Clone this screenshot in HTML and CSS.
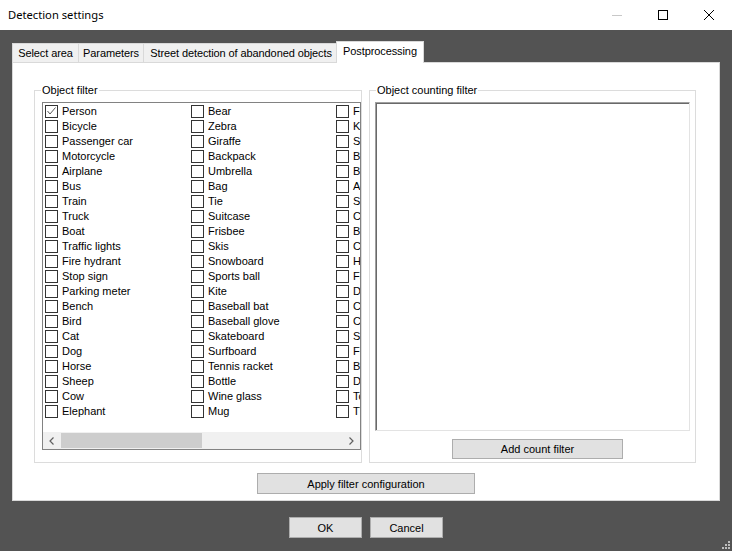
FILE: index.html
```html
<!DOCTYPE html>
<html>
<head>
<meta charset="utf-8">
<title>Detection settings</title>
<link rel="stylesheet" href="styles.css">
</head>
<body>
<div class="window">
  <div class="titlebar">
    <div class="title">Detection settings</div>
    <div class="caption-btns">
      <div class="cbtn"><svg width="10" height="10" viewBox="0 0 10 10"><path d="M0 5.5h10" stroke="#c8c8c8" stroke-width="1"/></svg></div>
      <div class="cbtn"><svg width="10" height="10" viewBox="0 0 10 10"><rect x="0.5" y="0.5" width="9" height="9" fill="none" stroke="#000" stroke-width="1"/></svg></div>
      <div class="cbtn"><svg width="10" height="10" viewBox="0 0 10 10"><path d="M0 0L10 10M10 0L0 10" stroke="#000" stroke-width="1"/></svg></div>
    </div>
  </div>
  <div class="client">
    <div class="tabs">
      <div class="tab t1">Select area</div>
      <div class="tab t2">Parameters</div>
      <div class="tab t3">Street detection of abandoned objects</div>
      <div class="tab t4 active">Postprocessing</div>
    </div>
    <div class="page">
      <div class="groups">
        <div class="group gl">
          <span class="glabel">Object filter</span>
          <div class="listbox">
            <div class="items">
              <div class="col c1">
                <div class="item"><span class="cb checked"><svg width="11" height="11" viewBox="0 0 11 11"><polyline points="1.5,5 4,8 9.5,1.5" fill="none" stroke="#5a5a5a" stroke-width="1"/></svg></span>Person</div>
                <div class="item"><span class="cb"></span>Bicycle</div>
                <div class="item"><span class="cb"></span>Passenger car</div>
                <div class="item"><span class="cb"></span>Motorcycle</div>
                <div class="item"><span class="cb"></span>Airplane</div>
                <div class="item"><span class="cb"></span>Bus</div>
                <div class="item"><span class="cb"></span>Train</div>
                <div class="item"><span class="cb"></span>Truck</div>
                <div class="item"><span class="cb"></span>Boat</div>
                <div class="item"><span class="cb"></span>Traffic lights</div>
                <div class="item"><span class="cb"></span>Fire hydrant</div>
                <div class="item"><span class="cb"></span>Stop sign</div>
                <div class="item"><span class="cb"></span>Parking meter</div>
                <div class="item"><span class="cb"></span>Bench</div>
                <div class="item"><span class="cb"></span>Bird</div>
                <div class="item"><span class="cb"></span>Cat</div>
                <div class="item"><span class="cb"></span>Dog</div>
                <div class="item"><span class="cb"></span>Horse</div>
                <div class="item"><span class="cb"></span>Sheep</div>
                <div class="item"><span class="cb"></span>Cow</div>
                <div class="item"><span class="cb"></span>Elephant</div>
              </div>
              <div class="col c2">
                <div class="item"><span class="cb"></span>Bear</div>
                <div class="item"><span class="cb"></span>Zebra</div>
                <div class="item"><span class="cb"></span>Giraffe</div>
                <div class="item"><span class="cb"></span>Backpack</div>
                <div class="item"><span class="cb"></span>Umbrella</div>
                <div class="item"><span class="cb"></span>Bag</div>
                <div class="item"><span class="cb"></span>Tie</div>
                <div class="item"><span class="cb"></span>Suitcase</div>
                <div class="item"><span class="cb"></span>Frisbee</div>
                <div class="item"><span class="cb"></span>Skis</div>
                <div class="item"><span class="cb"></span>Snowboard</div>
                <div class="item"><span class="cb"></span>Sports ball</div>
                <div class="item"><span class="cb"></span>Kite</div>
                <div class="item"><span class="cb"></span>Baseball bat</div>
                <div class="item"><span class="cb"></span>Baseball glove</div>
                <div class="item"><span class="cb"></span>Skateboard</div>
                <div class="item"><span class="cb"></span>Surfboard</div>
                <div class="item"><span class="cb"></span>Tennis racket</div>
                <div class="item"><span class="cb"></span>Bottle</div>
                <div class="item"><span class="cb"></span>Wine glass</div>
                <div class="item"><span class="cb"></span>Mug</div>
              </div>
              <div class="col c3">
                <div class="item"><span class="cb"></span>Fork</div>
                <div class="item"><span class="cb"></span>Knife</div>
                <div class="item"><span class="cb"></span>Spoon</div>
                <div class="item"><span class="cb"></span>Bowl</div>
                <div class="item"><span class="cb"></span>Banana</div>
                <div class="item"><span class="cb"></span>Apple</div>
                <div class="item"><span class="cb"></span>Sandwich</div>
                <div class="item"><span class="cb"></span>Citrus</div>
                <div class="item"><span class="cb"></span>Broccoli</div>
                <div class="item"><span class="cb"></span>Carrot</div>
                <div class="item"><span class="cb"></span>Hot dog</div>
                <div class="item"><span class="cb"></span>Fast food</div>
                <div class="item"><span class="cb"></span>Donut</div>
                <div class="item"><span class="cb"></span>Cake</div>
                <div class="item"><span class="cb"></span>Chair</div>
                <div class="item"><span class="cb"></span>Sofa</div>
                <div class="item"><span class="cb"></span>Flowerpot</div>
                <div class="item"><span class="cb"></span>Bed</div>
                <div class="item"><span class="cb"></span>Dining table</div>
                <div class="item"><span class="cb"></span>Toilet</div>
                <div class="item"><span class="cb"></span>TV</div>
              </div>
            </div>
            <div class="hscroll">
              <div class="arrow"><svg width="5" height="8" viewBox="0 0 5 8"><polyline points="4.5,0.5 1,4 4.5,7.5" fill="none" stroke="#606060" stroke-width="1.2"/></svg></div>
              <div class="track"><div class="thumb"></div></div>
              <div class="arrow"><svg width="5" height="8" viewBox="0 0 5 8"><polyline points="0.5,0.5 4,4 0.5,7.5" fill="none" stroke="#606060" stroke-width="1.2"/></svg></div>
            </div>
          </div>
        </div>
        <div class="group gr">
          <span class="glabel">Object counting filter</span>
          <div class="countbox"></div>
          <button class="btn addbtn">Add count filter</button>
        </div>
      </div>
      <div class="applyrow"><button class="btn applybtn">Apply filter configuration</button></div>
    </div>
    <div class="dlgbtns">
      <button class="btn dbtn">OK</button>
      <button class="btn dbtn">Cancel</button>
    </div>
  </div>
  <svg class="grip" width="10" height="10" viewBox="0 0 10 10">
    <rect x="7" y="1" width="2" height="2" fill="#bdbdbd"/>
    <rect x="4" y="4" width="2" height="2" fill="#bdbdbd"/>
    <rect x="7" y="4" width="2" height="2" fill="#bdbdbd"/>
    <rect x="1" y="7" width="2" height="2" fill="#bdbdbd"/>
    <rect x="4" y="7" width="2" height="2" fill="#bdbdbd"/>
    <rect x="7" y="7" width="2" height="2" fill="#bdbdbd"/>
  </svg>
</div>
</body>
</html>
```

FILE: styles.css
```css
* { box-sizing: border-box; }
html, body { margin: 0; padding: 0; }
body {
  width: 732px;
  height: 551px;
  overflow: hidden;
  font-family: "Liberation Sans", Arial, sans-serif;
  font-size: 11px;
  color: #000;
  background: #535353;
}
.window {
  position: relative;
  width: 732px;
  height: 551px;
  display: flex;
  flex-direction: column;
}
.titlebar {
  height: 30px;
  background: #fff;
  display: flex;
  align-items: center;
  justify-content: space-between;
}
.title {
  font-family: "Noto Sans", "Open Sans", sans-serif;
  font-size: 11.2px;
  padding-left: 8px;
  padding-bottom: 1px;
}
.caption-btns { display: flex; height: 30px; }
.cbtn {
  width: 46px;
  height: 30px;
  display: flex;
  align-items: center;
  justify-content: center;
}
.cbtn svg { display: block; }
.client {
  flex: 1;
  background: #535353;
  padding: 11px 12px 0 12px;
  display: flex;
  flex-direction: column;
}
.tabs {
  display: flex;
  align-items: flex-end;
  height: 21px;
}
.tab {
  height: 19px;
  background: #f0f0f0;
  border: 1px solid #d9d9d9;
  border-bottom: none;
  margin-right: -1px;
  display: flex;
  align-items: center;
  justify-content: center;
  white-space: nowrap;
  padding-bottom: 1px;
  letter-spacing: -0.1px;
}
.t1 { width: 67px; }
.t2 { width: 66px; }
.t3 { width: 196px; }
.tab.active {
  width: 88px;
  height: 22px;
  margin-left: -2px;
  margin-bottom: -1px;
  background: #fff;
  position: relative;
  z-index: 1;
  padding-bottom: 4px;
}
.page {
  width: 708px;
  height: 439px;
  background: #fff;
  border: 1px solid #d9d9d9;
  padding: 27px 0 0 21px;
  display: flex;
  flex-direction: column;
}
.groups {
  display: flex;
  gap: 7px;
  height: 373px;
}
.group {
  position: relative;
  height: 373px;
  border: 1px solid #dcdcdc;
}
.glabel {
  position: absolute;
  top: -8px;
  left: 6px;
  background: #fff;
  padding: 0 1px;
  line-height: 14px;
  white-space: nowrap;
}
.gl {
  width: 328px;
  padding: 11px 0 0 7px;
}
.gr {
  width: 327px;
  padding: 11px 0 0 5px;
  display: flex;
  flex-direction: column;
  align-items: flex-start;
}
.listbox {
  width: 319px;
  height: 348px;
  border: 1px solid #828282;
  display: flex;
  flex-direction: column;
}
.items {
  flex: 1;
  display: flex;
  overflow: hidden;
  padding: 1px 0 0 2px;
}
.col {
  flex: none;
  display: flex;
  flex-direction: column;
}
.c1 { width: 146px; }
.c2 { width: 145px; }
.c3 { width: 145px; }
.item {
  height: 15px;
  display: flex;
  align-items: center;
  gap: 4px;
  white-space: nowrap;
  line-height: 15px;
}
.cb {
  width: 13px;
  height: 13px;
  flex: none;
  border: 1px solid #333;
  background: #fff;
  display: flex;
  align-items: center;
  justify-content: center;
}
.cb svg { display: block; }
.hscroll {
  height: 17px;
  background: #f0f0f0;
  display: flex;
  align-items: stretch;
}
.arrow {
  width: 17px;
  flex: none;
  display: flex;
  align-items: center;
  justify-content: center;
}
.track {
  flex: 1;
  padding: 1px 0 1px 1px;
}
.thumb {
  width: 141px;
  height: 15px;
  background: #cdcdcd;
}
.countbox {
  width: 315px;
  height: 329px;
  background: #fff;
  border-top: 1px solid #a0a0a0;
  border-left: 1px solid #a0a0a0;
  border-right: 1px solid #e3e3e3;
  border-bottom: 1px solid #e3e3e3;
  box-shadow: inset 1px 1px 0 #696969;
}
.btn {
  font-family: "Liberation Sans", Arial, sans-serif;
  font-size: 11px;
  color: #000;
  background: #e1e1e1;
  border: 1px solid #adadad;
  padding: 0;
  margin: 0;
  border-radius: 0;
}
.addbtn {
  margin-top: 8px;
  margin-left: 77px;
  width: 171px;
  height: 20px;
}
.applyrow {
  display: flex;
  justify-content: center;
  padding-right: 21px;
  margin-top: 10px;
}
.applybtn {
  width: 218px;
  height: 21px;
}
.dlgbtns {
  display: flex;
  justify-content: center;
  gap: 8px;
  margin-top: 16px;
}
.dbtn {
  width: 73px;
  height: 21px;
}
.grip {
  position: absolute;
  right: 1px;
  bottom: 1px;
}
```
